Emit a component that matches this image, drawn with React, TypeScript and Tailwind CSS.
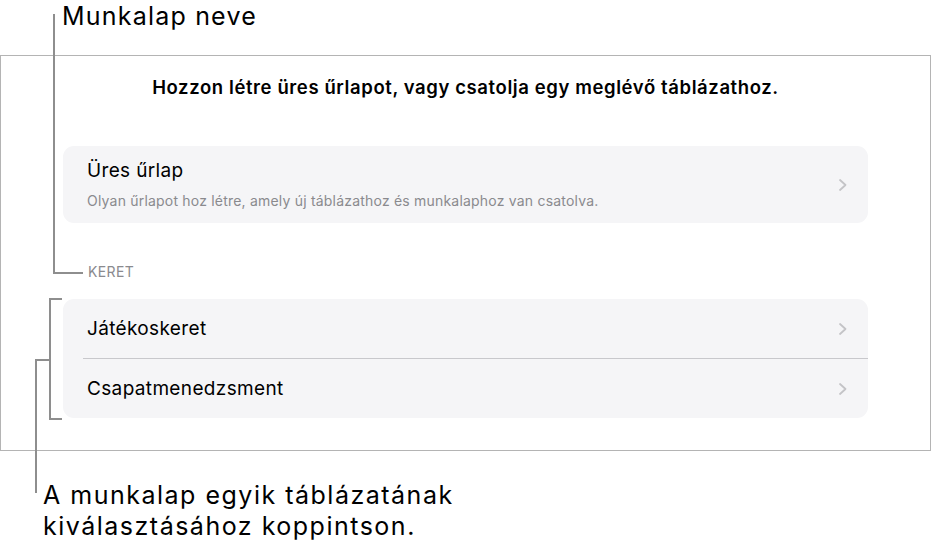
import React from "react";

const font = "font-['Inter','Liberation_Sans',sans-serif]";

function Chevron() {
  return (
    <svg width="10" height="14" viewBox="0 0 10 14" className="shrink-0">
      <path
        d="M2 2 L7.5 7 L2 12"
        fill="none"
        stroke="#c4c4c7"
        strokeWidth="1.8"
        strokeLinecap="round"
        strokeLinejoin="round"
      />
    </svg>
  );
}

function Row({ label, divider }: { label: string; divider?: boolean }) {
  return (
    <div>
      <div className="h-[59px] flex items-center justify-between pl-[24px] pr-[20px]">
        <span className="text-[19px] leading-[24px] tracking-[0.35px] text-black">{label}</span>
        <Chevron />
      </div>
      {divider && <div className="ml-[20px] h-px bg-[#c8c8cc]" />}
    </div>
  );
}

// callout lines of the annotated screenshot, drawn over the page
function Callouts() {
  return (
    <svg
      className="absolute inset-0 pointer-events-none"
      width="931"
      height="553"
      viewBox="0 0 931 553"
    >
      <g fill="none" stroke="#8e8e8e" strokeWidth="2">
        <path d="M54 14 V273 H83" />
        <path d="M62 299 H50 V419 H62" />
        <path d="M50 360 H36 V493" />
      </g>
    </svg>
  );
}

export default function App() {
  return (
    <div className={`relative w-[931px] h-[553px] bg-white overflow-hidden ${font}`}>
      <div className="h-[55px] pl-[62px]">
        <p className="text-[25px] leading-[32px] tracking-[1.2px] text-black">Munkalap neve</p>
      </div>

      <div className="w-[931px] h-[396px] border border-[#b4b4b4] pt-[19px] flex flex-col">
        <h1 className="text-center text-[18.5px] leading-[24px] tracking-[0.6px] font-semibold text-black">
          Hozzon létre üres űrlapot, vagy csatolja egy meglévő táblázathoz.
        </h1>

        <div className="ml-[62px] w-[805px] mt-[47px] h-[77px] rounded-[11px] bg-[#f5f5f7] pl-[24px] pr-[20px] pt-[13px] flex justify-between">
          <div className="flex flex-col gap-[8px]">
            <p className="text-[19px] leading-[24px] tracking-[0.35px] text-black">Üres űrlap</p>
            <p className="text-[14px] leading-[20px] tracking-[0.2px] text-[#8a8a8e]">
              Olyan űrlapot hoz létre, amely új táblázathoz és munkalaphoz van csatolva.
            </p>
          </div>
          <div className="h-[51px] flex items-center">
            <Chevron />
          </div>
        </div>

        <p className="pl-[87px] mt-[40px] text-[14px] leading-[18px] text-[#8a8a8e] tracking-[0.4px]">
          KERET
        </p>

        <div className="ml-[62px] w-[805px] mt-[18px] rounded-[11px] bg-[#f5f5f7] overflow-hidden">
          <Row label="Játékoskeret" divider />
          <Row label="Csapatmenedzsment" />
        </div>
      </div>

      <p className="pl-[43px] mt-[29px] text-[25px] leading-[31px] tracking-[1.5px] text-black">
        A munkalap egyik táblázatának
        <br />
        kiválasztásához koppintson.
      </p>

      <Callouts />
    </div>
  );
}
